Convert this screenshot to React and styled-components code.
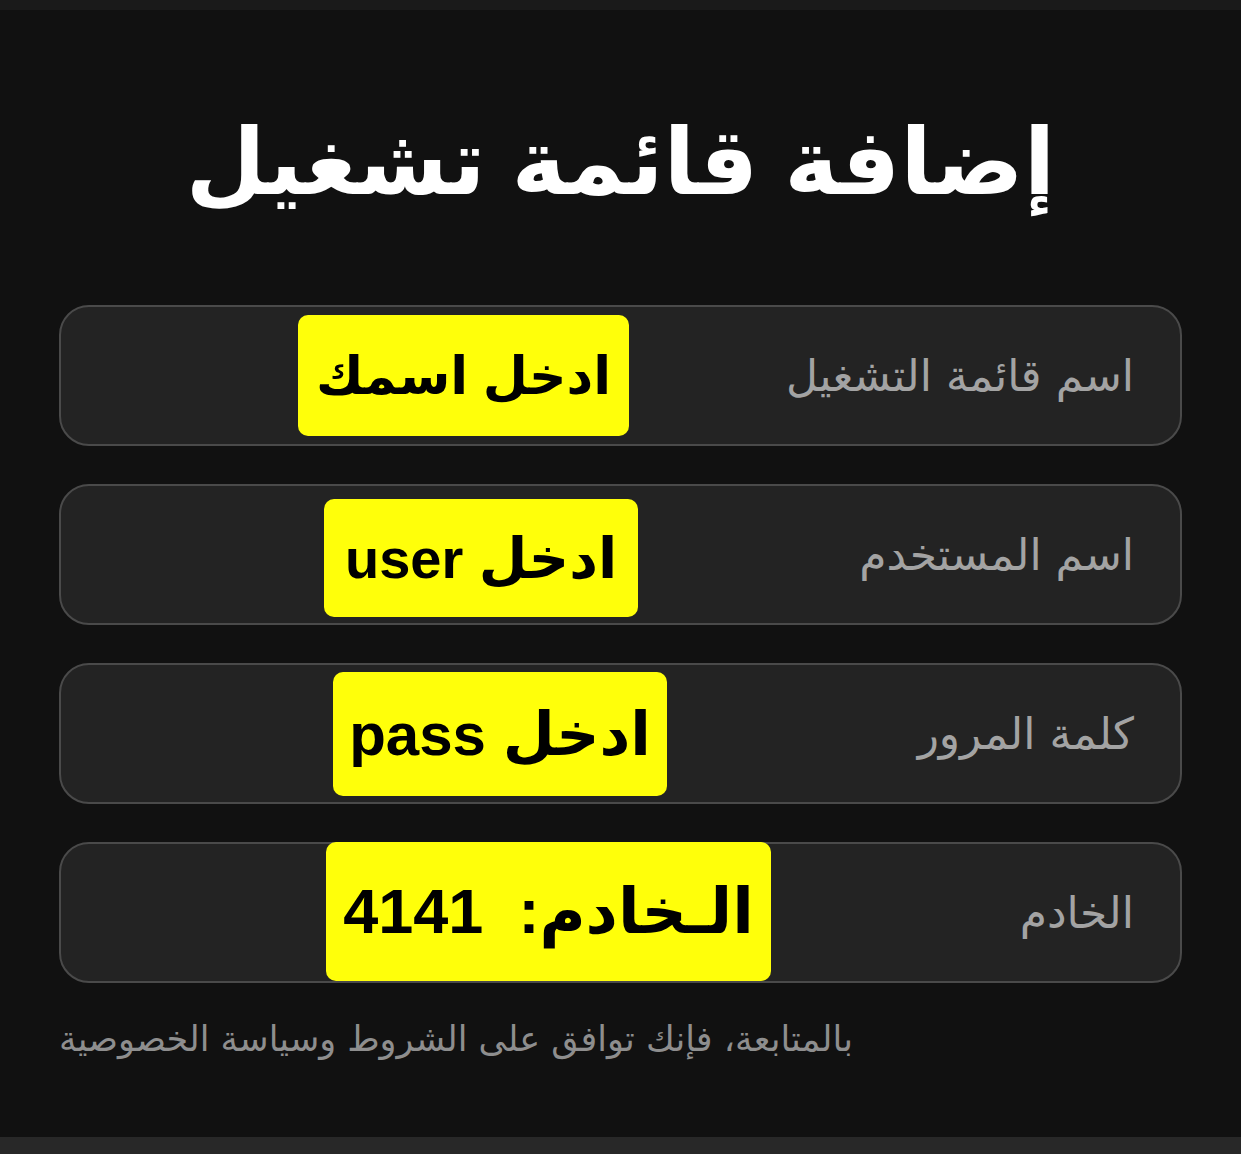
import React from 'react';
import styled, { createGlobalStyle } from 'styled-components';

const GlobalStyle = createGlobalStyle`
	html, body {
		margin: 0;
		padding: 0;
		background: #111111;
	}
	* {
		box-sizing: border-box;
	}
`;

const Page = styled.div`
	width: 100vw;
	min-height: 100vh;
	display: flex;
	flex-direction: column;
	background-color: #111111;
	font-family: 'DejaVu Sans', 'Noto Sans', sans-serif;
`;
const TopBar = styled.div`
	height: 10px;
	background-color: #1a1a1a;
`;
const Content = styled.main`
	flex: 1;
	display: flex;
	flex-direction: column;
	padding: 0 59px;
`;
const Title = styled.h1`
	margin: 78px 0 0;
	height: 217px;
	text-align: center;
	direction: rtl;
	color: #ffffff;
	font-size: 92px;
	font-weight: 700;
	line-height: 150px;
	word-spacing: -6px;
`;
const Form = styled.form`
	display: flex;
	flex-direction: column;
	gap: 38px;
`;
const Field = styled.div`
	position: relative;
	height: 141px;
	display: flex;
	align-items: center;
	justify-content: flex-end;
	padding-right: 46px;
	background-color: #232323;
	border: 2px solid #4a4a4a;
	border-radius: 30px;
`;
const Label = styled.span`
	direction: rtl;
	color: #a3a3a3;
	font-size: 44px;
`;
const Sticker = styled.div`
	position: absolute;
	left: ${(p) => p.$left}px;
	top: ${(p) => p.$top}px;
	width: ${(p) => p.$width}px;
	height: ${(p) => p.$height}px;
	display: flex;
	align-items: center;
	justify-content: center;
	direction: rtl;
	background-color: #ffff0a;
	border-radius: 10px;
	color: #000000;
	font-family: 'Liberation Sans', 'DejaVu Sans', sans-serif;
	font-weight: 700;
	font-size: ${(p) => p.$size}px;
	white-space: pre;
`;
const Terms = styled.p`
	margin: 36px 0 0;
	direction: rtl;
	text-align: left;
	color: #8e8e8e;
	font-size: 35px;
`;
const BottomBar = styled.div`
	height: 17px;
	background-color: #282828;
`;

const fields = [
	{ label: 'اسم قائمة التشغيل', sticker: 'ادخل اسمك', left: 237, top: 8, width: 331, height: 121, size: 52 },
	{ label: 'اسم المستخدم', sticker: 'ادخل user', left: 263, top: 13, width: 314, height: 118, size: 56 },
	{ label: 'كلمة المرور', sticker: 'ادخل pass', left: 272, top: 7, width: 334, height: 124, size: 60 },
	{ label: 'الخادم', sticker: 'الـخادم:  4141', left: 265, top: -2, width: 445, height: 139, size: 63 },
];

const App = () => {
	return (
		<>
			<GlobalStyle />
			<Page>
				<TopBar />
				<Content>
					<Title>إضافة قائمة تشغيل</Title>
					<Form onSubmit={(e) => e.preventDefault()}>
						{fields.map((f) => (
							<Field key={f.label}>
								<Label>{f.label}</Label>
								<Sticker
									$left={f.left}
									$top={f.top}
									$width={f.width}
									$height={f.height}
									$size={f.size}
								>
									{f.sticker}
								</Sticker>
							</Field>
						))}
					</Form>
					<Terms>بالمتابعة، فإنك توافق على الشروط وسياسة الخصوصية</Terms>
				</Content>
				<BottomBar />
			</Page>
		</>
	);
};

export default App;
